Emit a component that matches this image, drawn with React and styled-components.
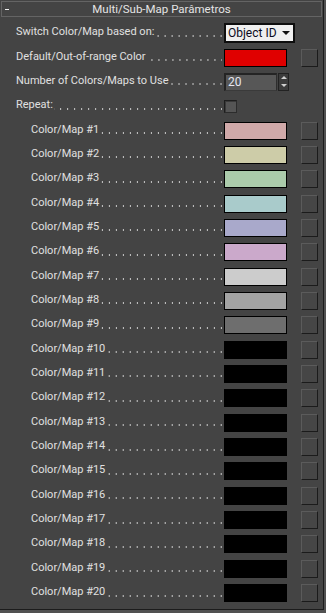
import React from "react";
import styled, { createGlobalStyle } from "styled-components";

const GlobalStyle = createGlobalStyle`
  html, body {
    margin: 0;
    padding: 0;
    background: #515151;
  }
  body {
    font-family: Roboto, "Liberation Sans", sans-serif;
  }
`;

// default colours of the 20 sub-maps
const mapColors = [
  "#d0a9a9",
  "#cdcca8",
  "#abcbab",
  "#a9cbcb",
  "#a9a9cb",
  "#cba9cb",
  "#cccccc",
  "#a3a3a3",
  "#6e6e6e",
  ...Array(11).fill("#000000"),
];

const ParamRow = ({ indent = 16, label, children }) => (
  <Row $indent={indent}>
    <LabelArea $indent={indent}>
      <Label>{label}</Label>
      <Dots />
    </LabelArea>
    {children}
  </Row>
);

const MultiSubMap = () => {
  return (
    <Panel>
      <Header>
        <Collapse />
        <Title>Multi/Sub-Map Parâmetros</Title>
        <span />
      </Header>
      <List>
        <ParamRow label="Switch Color/Map based on:">
          <Dropdown>
            <span>Object ID</span>
            <Arrow />
          </Dropdown>
        </ParamRow>
        <ParamRow label="Default/Out-of-range Color">
          <Slot>
            <Swatch $color="#e00000" />
          </Slot>
          <MapButton />
        </ParamRow>
        <ParamRow label="Number of Colors/Maps to Use">
          <Slot>
            <NumberBox>20</NumberBox>
            <SpinButtons>
              <SpinArrow $up />
              <SpinArrow />
            </SpinButtons>
          </Slot>
        </ParamRow>
        <ParamRow label="Repeat:">
          <Slot>
            <Checkbox />
          </Slot>
        </ParamRow>
        {mapColors.map((color, index) => (
          <ParamRow key={index} indent={31} label={`Color/Map #${index + 1}`}>
            <Slot>
              <Swatch $color={color} />
            </Slot>
            <MapButton />
          </ParamRow>
        ))}
      </List>
    </Panel>
  );
};

export default function App() {
  return (
    <>
      <GlobalStyle />
      <MultiSubMap />
    </>
  );
}

const Panel = styled.div`
  width: 324px;
  height: 610px;
  box-sizing: border-box;
  background: #444444;
  border-right: 1px solid #1c1c1c;
  border-bottom: 1px solid #1c1c1c;
  padding-top: 1px;
  overflow: hidden;
`;

const Header = styled.div`
  width: 321px;
  height: 16px;
  margin-left: 1px;
  box-sizing: border-box;
  border: 1px solid #646464;
  display: grid;
  grid-template-columns: 1fr auto 1fr;
  align-items: center;
`;

const Collapse = styled.div`
  width: 4px;
  height: 1px;
  margin-left: 3px;
  margin-top: 1px;
  background: #f2f2f2;
`;

const Title = styled.div`
  font-size: 11.5px;
  line-height: 14px;
  color: #e4e4e4;
  white-space: nowrap;
`;

const List = styled.div`
  margin-top: 4px;
  display: flex;
  flex-direction: column;
`;

const Row = styled.div`
  height: 24.35px;
  display: flex;
  align-items: center;
  padding-left: ${(props) => props.$indent}px;
`;

const LabelArea = styled.div`
  width: ${(props) => 222 - props.$indent}px;
  flex: 0 0 auto;
  display: flex;
  align-items: center;
  margin-right: 2px;
  align-self: stretch;
`;

const Label = styled.span`
  font-size: 11px;
  line-height: 14px;
  color: #e0e0e0;
  white-space: nowrap;
  margin-right: 1px;
  margin-bottom: 2px;
`;

const Dots = styled.span`
  flex: 1;
  height: 2px;
  margin-top: 5px;
  background-image: linear-gradient(to left, #cacaca 1px, transparent 1px);
  background-size: 7px 2px;
  background-repeat: repeat-x;
  background-position: right top;
`;

const Slot = styled.div`
  width: 77px;
  display: flex;
  align-items: center;
  flex-shrink: 0;
`;

const Swatch = styled.div`
  width: 63px;
  height: 18px;
  box-sizing: border-box;
  border: 1px solid #000;
  background: ${(props) => props.$color};
`;

const MapButton = styled.div`
  width: 17px;
  height: 18px;
  box-sizing: border-box;
  background: #464646;
  border-top: 1px solid #5b5b5b;
  border-left: 1px solid #5b5b5b;
  border-right: 1px solid #1b1b1b;
  border-bottom: 1px solid #1b1b1b;
  flex-shrink: 0;
`;

const Dropdown = styled.div`
  width: 71px;
  height: 20px;
  box-sizing: border-box;
  border: 2px solid #0e0e0e;
  background: #efefef;
  display: flex;
  align-items: center;
  justify-content: space-between;
  padding: 0 3px 0 2px;
  font-size: 12px;
  color: #0a0a20;
  flex-shrink: 0;
`;

const Arrow = styled.span`
  width: 0;
  height: 0;
  border-left: 4px solid transparent;
  border-right: 4px solid transparent;
  border-top: 4px solid #111;
`;

const NumberBox = styled.div`
  width: 53px;
  height: 18px;
  box-sizing: border-box;
  background: #575757;
  border-top: 2px solid #242424;
  border-left: 2px solid #242424;
  border-right: 1px solid #2e2e2e;
  border-bottom: 1px solid #3a3a3a;
  font-size: 12px;
  line-height: 15px;
  color: #e6e6f0;
  padding-left: 2px;
`;

const SpinButtons = styled.div`
  width: 11px;
  height: 18px;
  margin-left: 1px;
  box-sizing: border-box;
  background: #3c3c3c;
  border: 1px solid #222;
  display: flex;
  flex-direction: column;
  align-items: center;
  justify-content: space-around;
`;

const SpinArrow = styled.span`
  width: 0;
  height: 0;
  border-left: 3px solid transparent;
  border-right: 3px solid transparent;
  ${(props) =>
    props.$up ? "border-bottom: 3px solid #d0d0d0;" : "border-top: 3px solid #d0d0d0;"}
`;

const Checkbox = styled.div`
  width: 13px;
  height: 13px;
  box-sizing: border-box;
  background: #555;
  border-top: 1px solid #1e1e1e;
  border-left: 1px solid #1e1e1e;
  border-right: 1px solid #2c2c2c;
  border-bottom: 1px solid #2c2c2c;
  box-shadow: inset 1px 1px 0 #3a3a3a;
`;
